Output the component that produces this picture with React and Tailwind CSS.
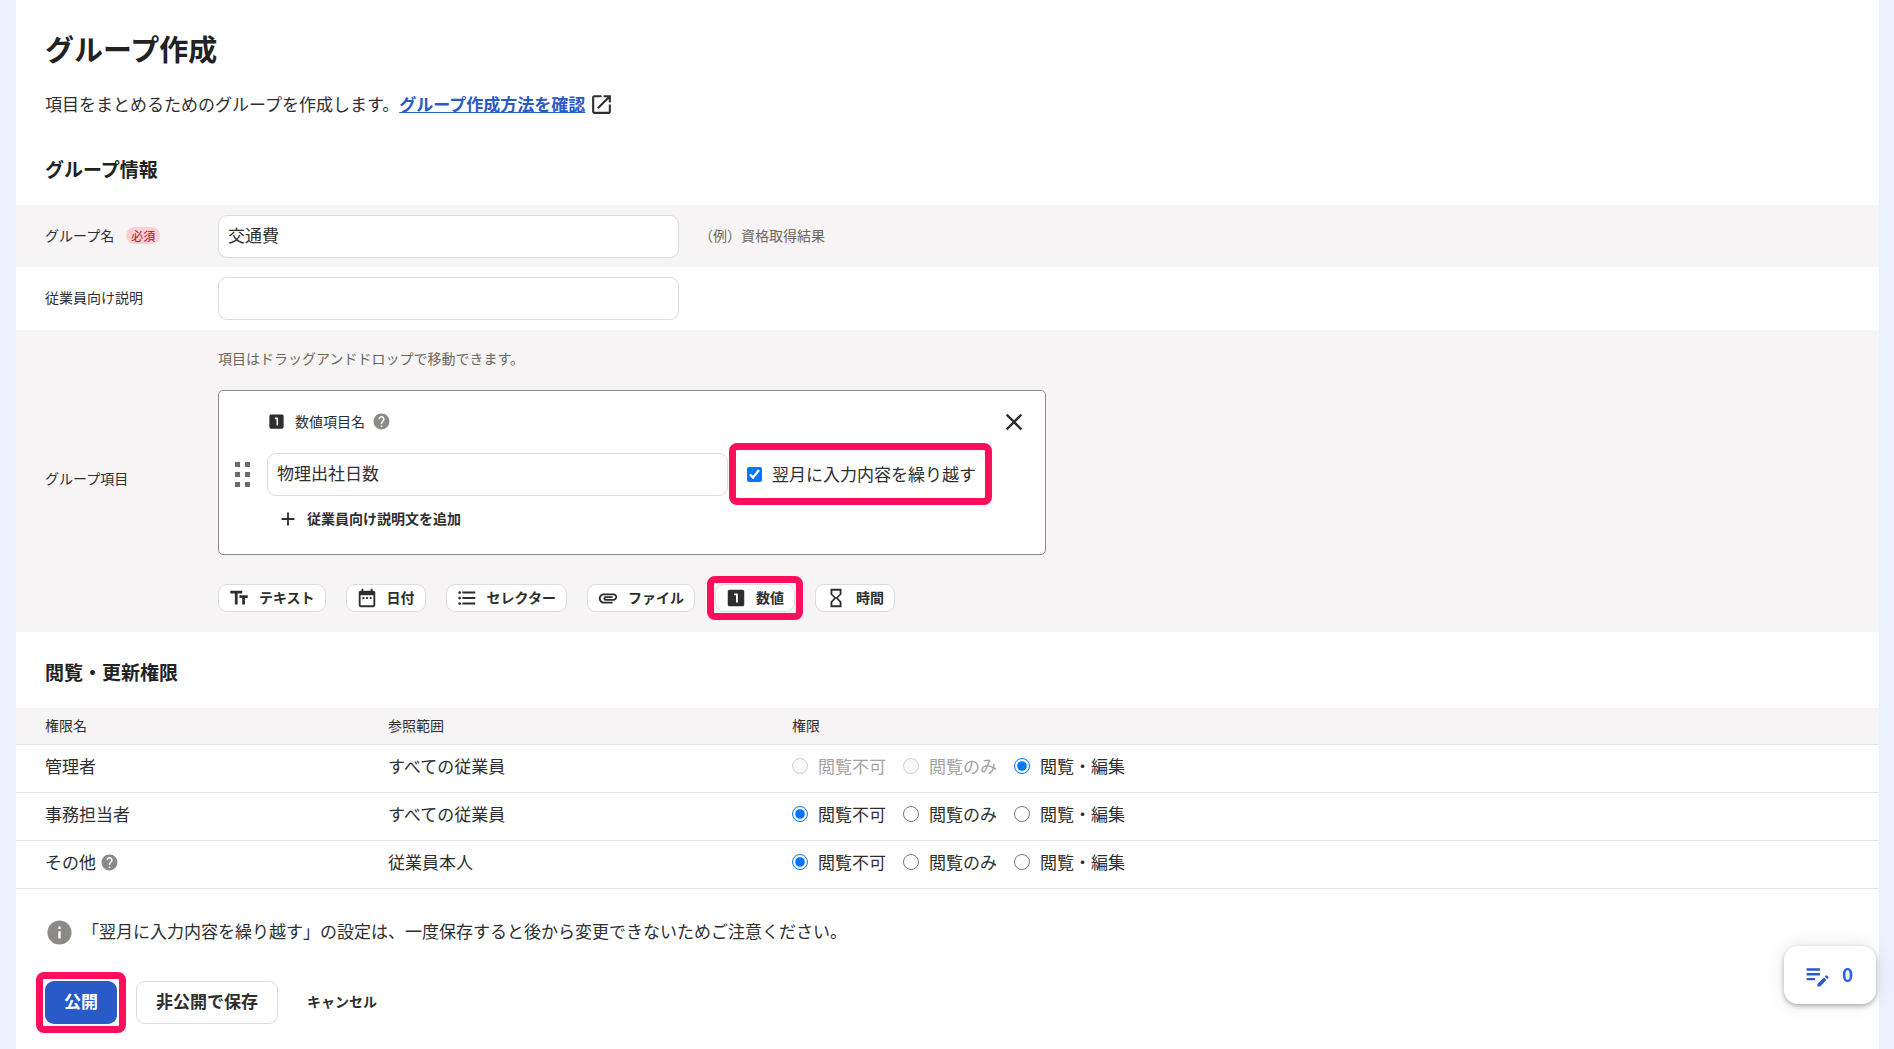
import React, { useState } from "react";
import {
  MdAdd,
  MdAttachment,
  MdClose,
  MdDateRange,
  MdEditNote,
  MdFormatListBulleted,
  MdHelp,
  MdHourglassEmpty,
  MdInfo,
  MdLooksOne,
  MdOpenInNew,
  MdTextFields,
} from "react-icons/md";

const itemTypes = [
  { id: "text", label: "テキスト", Icon: MdTextFields },
  { id: "date", label: "日付", Icon: MdDateRange },
  { id: "select", label: "セレクター", Icon: MdFormatListBulleted },
  { id: "file", label: "ファイル", Icon: MdAttachment },
  { id: "number", label: "数値", Icon: MdLooksOne, marked: true },
  { id: "time", label: "時間", Icon: MdHourglassEmpty },
];

const levels = ["閲覧不可", "閲覧のみ", "閲覧・編集"];

const roles = [
  { id: "admin", name: "管理者", scope: "すべての従業員", level: 2, locked: true },
  { id: "clerk", name: "事務担当者", scope: "すべての従業員", level: 0 },
  { id: "other", name: "その他", scope: "従業員本人", level: 0, help: true },
];

const inputClass =
  "h-[43px] w-full max-w-[461px] rounded-[9px] border border-[#dcdcdc] bg-white px-[9px] pb-1 text-[17px]";

// Red frame drawn over a control
function Marker({ className }) {
  return (
    <span
      className={`pointer-events-none absolute rounded-lg border-[7px] border-[#ff0f5b] ${className}`}
    ></span>
  );
}

function DragHandle() {
  return (
    <svg viewBox="0 0 15 25" className="mt-1 h-[25px] w-[15px] fill-[#6b6b6b]">
      <path d="M0 0h5v5H0zM10 0h5v5h-5zM0 10h5v5H0zM10 10h5v5h-5zM0 20h5v5H0zM10 20h5v5h-5z" />
    </svg>
  );
}

function GroupItem() {
  const [name, setName] = useState("物理出社日数");
  const [carryOver, setCarryOver] = useState(true);

  return (
    <div className="relative flex h-[165px] max-w-[828px] items-center rounded-[5px] border border-[#8f8b83] bg-white pl-4">
      <DragHandle />
      <div className="ml-[17px] flex-1 pb-1">
        <div className="flex h-5 items-center text-[14px]">
          <MdLooksOne className="size-[19px]" />
          <label htmlFor="item-name" className="ml-[9px]">
            数値項目名
          </label>
          <MdHelp className="ml-[7px] size-[19px] text-[#8c8a87]" />
        </div>
        <div className="mt-[21px] flex items-center">
          <input
            id="item-name"
            className={inputClass}
            value={name}
            onChange={(e) => setName(e.target.value)}
          />
          <div className="relative ml-[19px]">
            <label className="flex items-center whitespace-nowrap text-[17px]">
              <input
                type="checkbox"
                className="mr-[10px] size-[15px]"
                checked={carryOver}
                onChange={(e) => setCarryOver(e.target.checked)}
              />
              翌月に入力内容を繰り越す
            </label>
            <Marker className="-left-[18px] -right-4 -top-[18px] -bottom-[18px]" />
          </div>
        </div>
        <button className="mt-3 ml-[10px] flex items-center text-[14px] font-bold">
          <MdAdd className="mr-2 size-[22px]" />
          従業員向け説明文を追加
        </button>
      </div>
      <button aria-label="閉じる" className="absolute top-[17px] right-[17px]">
        <MdClose className="size-7" />
      </button>
    </div>
  );
}

function GroupForm() {
  const [groupName, setGroupName] = useState("交通費");
  const [description, setDescription] = useState("");

  return (
    <div className="text-[14px]">
      <div className="flex h-[62px] items-center bg-[#f6f4f5] px-[29px]">
        <div className="flex w-[173px] shrink-0 items-center pb-[2px]">
          <label htmlFor="group-name">グループ名</label>
          <span className="ml-3 rounded-full bg-[#fbd0d5] px-[5px] text-[12px] leading-[17px] text-[#a3142e]">
            必須
          </span>
        </div>
        <input
          id="group-name"
          className={inputClass}
          value={groupName}
          onChange={(e) => setGroupName(e.target.value)}
        />
        <span className="ml-5 pb-[2px] text-[#6b675f]">（例）資格取得結果</span>
      </div>
      <div className="flex h-[63px] items-center px-[29px]">
        <label htmlFor="group-desc" className="w-[173px] shrink-0 pb-[2px]">
          従業員向け説明
        </label>
        <input
          id="group-desc"
          className={inputClass}
          value={description}
          onChange={(e) => setDescription(e.target.value)}
        />
      </div>
      <div className="flex items-center bg-[#f6f4f5] px-[29px] pt-[17px] pb-5">
        <div className="w-[173px] shrink-0 pb-[2px]">グループ項目</div>
        <div className="flex-1">
          <p className="mb-[21px] leading-[22px] text-[#6b675f]">
            項目はドラッグアンドドロップで移動できます。
          </p>
          <GroupItem />
          <div className="mt-[29px] flex gap-5">
            {itemTypes.map(({ id, label, Icon, marked }) => (
              <div key={id} className="relative">
                <button className="flex h-7 items-center gap-[9px] rounded-[9px] border border-[#dcdcdc] bg-white pr-[10px] pb-px pl-[9px] font-bold whitespace-nowrap">
                  <Icon className="size-[22px]" />
                  {label}
                </button>
                {marked && <Marker className="-inset-2" />}
              </div>
            ))}
          </div>
        </div>
      </div>
    </div>
  );
}

function PermissionTable() {
  const [picked, setPicked] = useState({ admin: 2, clerk: 0, other: 0 });

  return (
    <table className="w-full table-fixed text-left text-[17px]">
      <thead>
        <tr className="h-9 border-b border-[#e5e5e5] bg-[#f6f4f5] text-[14px]">
          <th className="w-[372px] pl-[29px] font-normal">権限名</th>
          <th className="w-[404px] font-normal">参照範囲</th>
          <th className="font-normal">権限</th>
        </tr>
      </thead>
      <tbody>
        {roles.map((role) => (
          <tr key={role.id} className="h-12 border-b border-[#e5e5e5]">
            <td className="pb-1 pl-[29px]">
              <div className="flex items-center">
                {role.name}
                {role.help && <MdHelp className="ml-1 size-[19px] text-[#8c8a87]" />}
              </div>
            </td>
            <td className="pb-1">{role.scope}</td>
            <td className="pb-1">
              <div className="flex gap-[17px]">
                {levels.map((level, i) => {
                  const disabled = role.locked && i !== role.level;
                  return (
                    <label
                      key={level}
                      className={`flex items-center ${disabled ? "text-[#a3a3a3]" : ""}`}
                    >
                      <input
                        type="radio"
                        name={role.id}
                        className="mr-[10px] size-4"
                        disabled={disabled}
                        checked={picked[role.id] === i}
                        onChange={() => setPicked({ ...picked, [role.id]: i })}
                      />
                      {level}
                    </label>
                  );
                })}
              </div>
            </td>
          </tr>
        ))}
      </tbody>
    </table>
  );
}

export default function App() {
  return (
    <div className="min-h-screen bg-[#eaf2ff] pr-[15px] pl-4 font-['Noto_Sans_CJK_JP',sans-serif] text-[#2e2e2e]">
      <main className="min-h-screen bg-white pt-[27px]">
        <div className="px-[29px]">
          <h1 className="text-[29px] leading-[42px] font-bold text-[#222]">グループ作成</h1>
          <p className="mt-[22px] flex items-center text-[17px] leading-[26px]">
            項目をまとめるためのグループを作成します。
            <a href="#" className="font-bold text-[#285ac8] underline">
              グループ作成方法を確認
            </a>
            <MdOpenInNew className="ml-1 size-[25px]" />
          </p>
          <h2 className="mt-[38px] text-[19px] leading-7 font-bold text-[#222]">グループ情報</h2>
        </div>
        <div className="mt-[22px]">
          <GroupForm />
        </div>
        <h2 className="mt-[26px] mb-[22px] px-[29px] text-[19px] leading-7 font-bold text-[#222]">
          閲覧・更新権限
        </h2>
        <PermissionTable />
        <div className="mt-[29px] flex items-center px-[29px] text-[17px]">
          <MdInfo className="size-[29px] text-[#8c8a87]" />
          <p className="ml-2 pb-[2px]">
            「翌月に入力内容を繰り越す」の設定は、一度保存すると後から変更できないためご注意ください。
          </p>
        </div>
        <div className="mt-[34px] flex items-center px-[29px] pb-6">
          <div className="relative">
            <button className="h-[43px] rounded-[9px] bg-[#285ac8] px-[19px] pb-[2px] text-[17px] font-bold text-white">
              公開
            </button>
            <Marker className="-inset-[9px]" />
          </div>
          <button className="ml-[19px] h-[43px] rounded-[9px] border border-[#dcdcdc] px-[19px] pb-[2px] text-[17px] font-bold">
            非公開で保存
          </button>
          <button className="ml-[29px] pb-[2px] text-[14px] font-bold">キャンセル</button>
        </div>
      </main>
      <button className="fixed right-[18px] bottom-[45px] flex h-[58px] w-[92px] items-center justify-center gap-[10px] rounded-[14px] bg-white pr-1 text-[19px] font-bold text-[#2a62e8] shadow-[0_2px_5px_rgba(0,0,0,0.3),0_0_20px_rgba(0,0,0,0.1)]">
        <MdEditNote className="size-[29px] text-[#285ac8]" />
        <span className="pb-[2px]">0</span>
      </button>
    </div>
  );
}
